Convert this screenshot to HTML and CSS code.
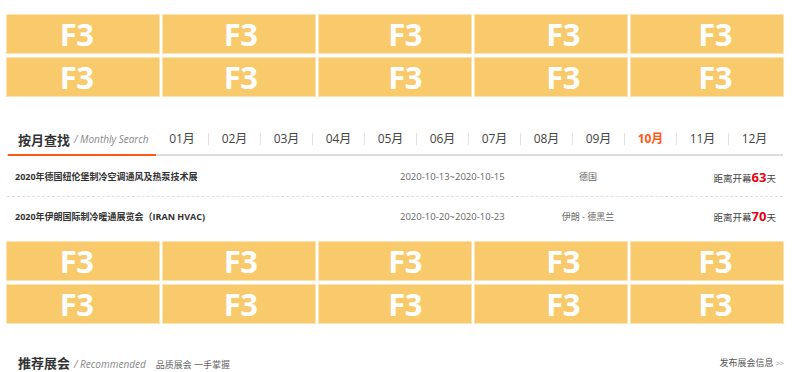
FILE: index.html
```html
<!DOCTYPE html>
<html lang="zh-CN">
<head>
<meta charset="utf-8">
<title>按月查找</title>
<link rel="stylesheet" href="styles.css">
</head>
<body>
<div class="page">
  <div class="ads">
    <div class="ad">F3</div><div class="ad">F3</div><div class="ad">F3</div><div class="ad">F3</div><div class="ad">F3</div>
    <div class="ad">F3</div><div class="ad">F3</div><div class="ad">F3</div><div class="ad">F3</div><div class="ad">F3</div>
  </div>

  <div class="tabbar">
    <div class="tab-title"><span class="cn">按月查找</span><span class="en">/ Monthly Search</span></div>
    <ul class="months">
      <li>01月</li><li>02月</li><li>03月</li><li>04月</li><li>05月</li><li>06月</li>
      <li>07月</li><li>08月</li><li>09月</li><li class="active">10月</li><li>11月</li><li>12月</li>
    </ul>
  </div>

  <div class="list">
    <div class="row">
      <div class="name">2020年德国纽伦堡制冷空调通风及热泵技术展</div>
      <div class="date">2020-10-13~2020-10-15</div>
      <div class="place">德国</div>
      <div class="count">距离开幕<b>63</b>天</div>
    </div>
    <div class="row">
      <div class="name">2020年伊朗国际制冷暖通展览会（IRAN HVAC)</div>
      <div class="date">2020-10-20~2020-10-23</div>
      <div class="place">伊朗 - 德黑兰</div>
      <div class="count">距离开幕<b>70</b>天</div>
    </div>
  </div>

  <div class="ads">
    <div class="ad">F3</div><div class="ad">F3</div><div class="ad">F3</div><div class="ad">F3</div><div class="ad">F3</div>
    <div class="ad">F3</div><div class="ad">F3</div><div class="ad">F3</div><div class="ad">F3</div><div class="ad">F3</div>
  </div>

  <div class="section-head">
    <div class="left">
      <span class="cn">推荐展会</span><span class="en">/ Recommended</span><span class="sub">品质展会 一手掌握</span>
    </div>
    <a class="more" href="#">发布展会信息 <span class="arr">&gt;&gt;</span></a>
  </div>
</div>
</body>
</html>
```

FILE: styles.css
```css
html, body {
  margin: 0;
  padding: 0;
  background: #fff;
}
body {
  font-family: "Open Sans", "Noto Sans CJK SC", sans-serif;
  color: #333;
}
.page {
  width: 776px;
  margin-left: 7px;
  padding-top: 15px;
}
.ads {
  display: grid;
  grid-template-columns: repeat(5, 152px);
  grid-auto-rows: 38px;
  column-gap: 4px;
  row-gap: 5px;
}
.ad {
  background: #f9ca6b;
  box-shadow: 0 0 0 1px #fbe3b4;
  color: #fff;
  font-family: "Open Sans", sans-serif;
  font-weight: 700;
  font-size: 31px;
  line-height: 38px;
  text-align: center;
  letter-spacing: -0.5px;
}
.ad:nth-child(5n+1) { padding-right: 13px; }
.ad:nth-child(5n+2) { padding-left: 3px; }
.ad:nth-child(5n+3) { padding-left: 20px; }
.ad:nth-child(5n+4) { padding-left: 24px; }
.ad:nth-child(5n+5) { padding-left: 16px; }

.tabbar {
  margin-top: 28px;
  display: flex;
  height: 30px;
  border-bottom: 2px solid #dcdcdc;
}
.tab-title {
  width: 138px;
  margin-left: 1px;
  padding-left: 10px;
  border-bottom: 2px solid #ff5a14;
  margin-bottom: -2px;
  display: flex;
  align-items: center;
  white-space: nowrap;
}
.cn {
  font-size: 13px;
  font-weight: 700;
  color: #333;
}
.en {
  font-size: 10px;
  font-style: italic;
  color: #888;
  margin-left: 4px;
}
.months {
  list-style: none;
  margin: 0;
  padding: 0;
  display: flex;
  align-items: center;
}
.months li {
  width: 52px;
  text-align: center;
  font-size: 12px;
  line-height: 12px;
  color: #444;
  border-left: 1px solid #e2e2e2;
  box-sizing: border-box;
}
.months li:first-child { border-left: 0; }
.months li.active {
  color: #ff5a14;
  font-weight: 700;
}

.list {
  margin-top: 1px;
  margin-bottom: 7px;
}
.row {
  display: grid;
  grid-template-columns: 385px 130px 116px 1fr;
  align-items: center;
  height: 39px;
  padding: 0 7px 0 8px;
  font-size: 9px;
}
.row + .row { border-top: 1px dashed #e0e0e0; height: 38px; }
.name {
  font-weight: 700;
  color: #333;
}
.date {
  color: #666;
  font-size: 9.5px;
}
.place {
  color: #666;
  text-align: center;
}
.count {
  text-align: right;
  color: #444;
  font-size: 9.5px;
}
.count b {
  color: #e60012;
  font-size: 13px;
  font-weight: 700;
}

.section-head {
  margin-top: 27px;
  height: 24px;
  display: flex;
  align-items: center;
  justify-content: space-between;
  padding-left: 11px;
}
.section-head .left {
  display: flex;
  align-items: baseline;
  white-space: nowrap;
}
.section-head .en { margin-left: 4px; font-size: 10px; }
.sub {
  font-size: 9px;
  color: #666;
  margin-left: 10px;
}
.more {
  font-size: 9px;
  color: #555;
  text-decoration: none;
}
.more .arr {
  color: #999;
  font-size: 8px;
  letter-spacing: -1px;
}
```
